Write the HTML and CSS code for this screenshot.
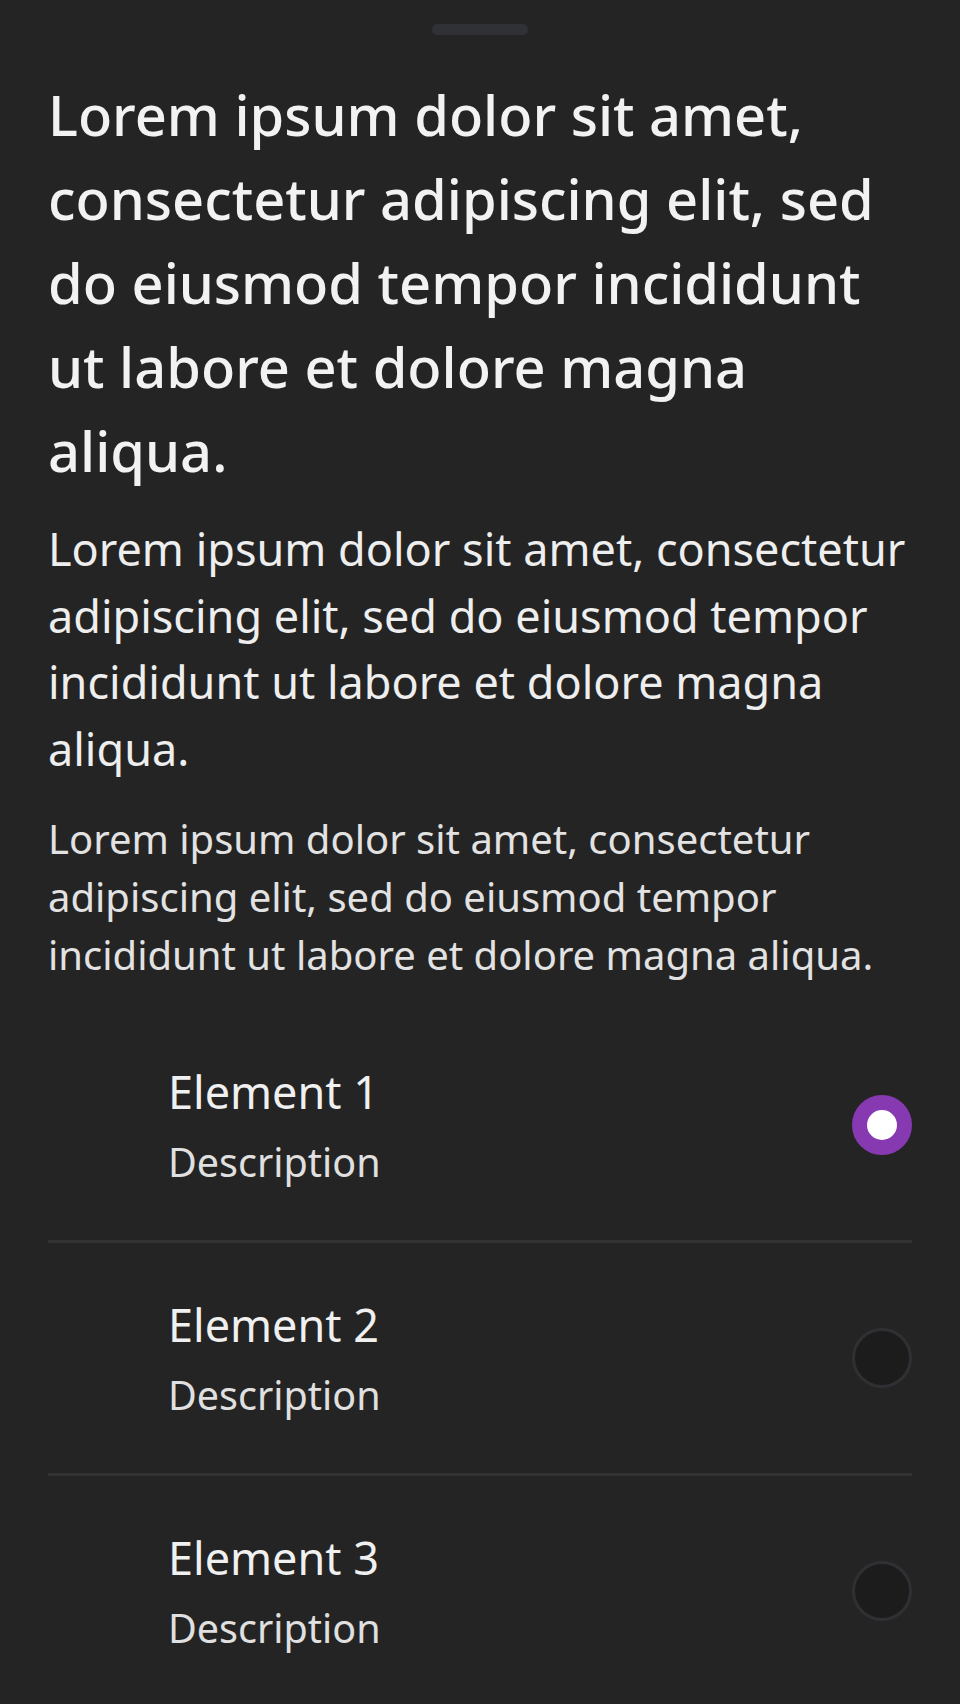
FILE: index.html
```html
<!DOCTYPE html>
<html lang="en">
<head>
<meta charset="utf-8">
<title>Sheet</title>
<link rel="stylesheet" href="styles.css">
</head>
<body>
<div class="sheet">
  <div class="handle"></div>
  <div class="content">
    <h1 class="title">Lorem ipsum dolor sit amet, consectetur adipiscing elit, sed do eiusmod tempor incididunt ut labore et dolore magna aliqua.</h1>
    <p class="body">Lorem ipsum dolor sit amet, consectetur adipiscing elit, sed do eiusmod tempor incididunt ut labore et dolore magna aliqua.</p>
    <p class="small">Lorem ipsum dolor sit amet, consectetur adipiscing elit, sed do eiusmod tempor incididunt ut labore et dolore magna aliqua.</p>
    <ul class="list">
      <li class="row">
        <div class="lead"></div>
        <div class="texts">
          <div class="name">Element 1</div>
          <div class="desc">Description</div>
        </div>
        <div class="radio radio-on"></div>
      </li>
      <li class="row">
        <div class="lead"></div>
        <div class="texts">
          <div class="name">Element 2</div>
          <div class="desc">Description</div>
        </div>
        <div class="radio"></div>
      </li>
      <li class="row">
        <div class="lead"></div>
        <div class="texts">
          <div class="name">Element 3</div>
          <div class="desc">Description</div>
        </div>
        <div class="radio"></div>
      </li>
    </ul>
  </div>
</div>
</body>
</html>
```
FILE: styles.css
```css
html, body {
  margin: 0;
  padding: 0;
  background: #242424;
}
body {
  font-family: "Noto Sans", "Open Sans", sans-serif;
  color: #f0f0f0;
  height: 1704px;
  overflow: hidden;
}
.sheet {
  display: flex;
  flex-direction: column;
  align-items: stretch;
}
.handle {
  align-self: center;
  width: 96px;
  height: 11px;
  margin-top: 24px;
  border-radius: 6px;
  background: #303136;
}
.content {
  padding: 37px 48px 0;
  display: flex;
  flex-direction: column;
}
.title {
  margin: 0;
  font-size: 56px;
  font-weight: 500;
  line-height: 84px;
  color: #f2f2f2;
}
.body {
  margin: 24px 0 0;
  font-size: 45px;
  font-weight: 400;
  line-height: 66.67px;
  color: #eeeeee;
}
.small {
  margin: 27px 0 0;
  font-size: 40px;
  font-weight: 400;
  line-height: 58px;
  color: #e2e2e2;
}
.list {
  list-style: none;
  margin: 26px 0 0;
  padding: 0;
}
.row {
  display: flex;
  align-items: center;
  height: 230px;
  border-bottom: 3px solid #323232;
}
.lead {
  width: 120px;
  flex: none;
}
.texts {
  flex: 1;
  display: flex;
  flex-direction: column;
}
.name {
  font-size: 45px;
  line-height: 75px;
  color: #f0f0f0;
}
.desc {
  font-size: 39.5px;
  line-height: 67px;
  color: #e0e0e0;
}
.radio {
  flex: none;
  width: 60px;
  height: 60px;
  box-sizing: border-box;
  border-radius: 50%;
  background: #1c1c1c;
  border: 3px solid #303034;
}
.radio-on {
  background: #ffffff;
  border: 15px solid #8639b0;
}
```
